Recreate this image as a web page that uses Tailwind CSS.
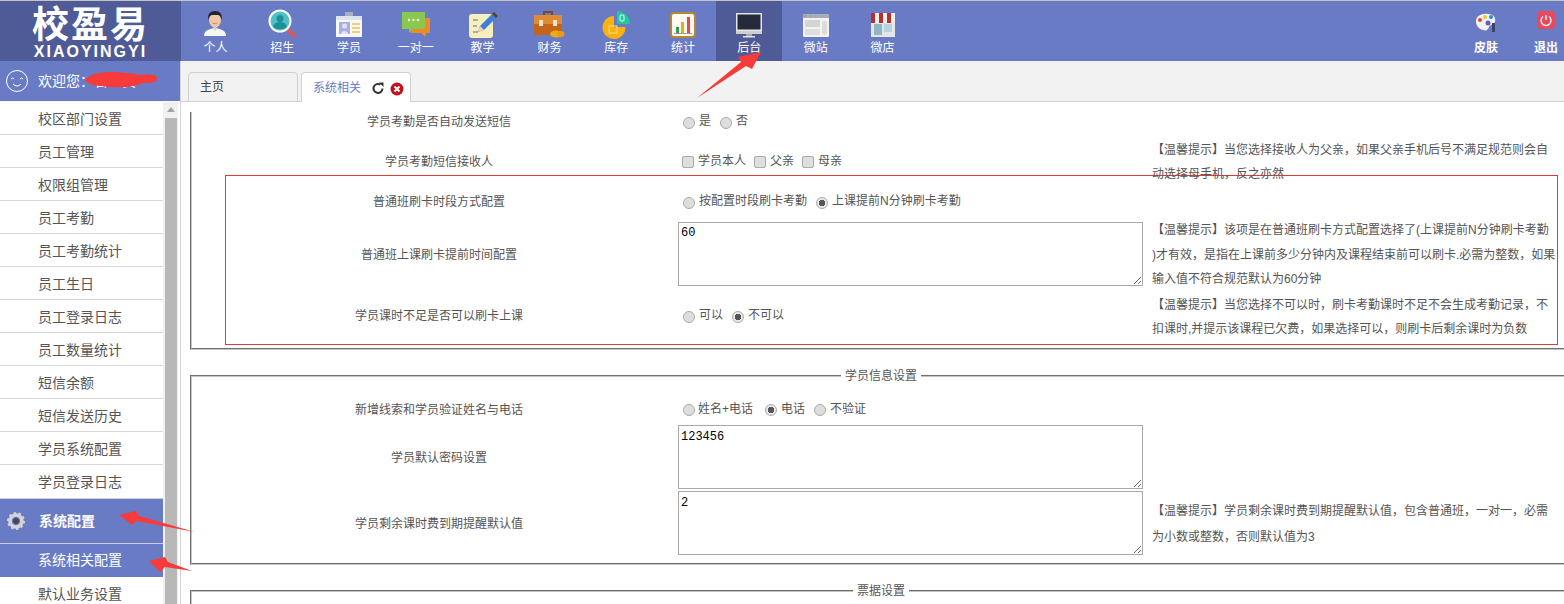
<!DOCTYPE html>
<html>
<head>
    <meta charset="utf-8">
    <title>校盈易 - 系统相关配置</title>
    <script src="https://cdn.jsdelivr.net/npm/@tailwindcss/browser@4"></script>
</head>
<body class="relative h-[604px] overflow-hidden bg-white font-['Liberation_Sans','Noto_Sans_CJK_SC',sans-serif] text-xs text-[#555]">

    <!-- Top nav -->
    <header class="flex h-[61px] overflow-hidden border-t border-[#c4c4c4] bg-[#6a7bc6] text-white">
        <div class="flex w-[181px] shrink-0 flex-col items-center bg-[#4f5b97] font-bold">
            <div class="mt-[7px] h-[35px] text-[37px] leading-[36px] tracking-[2px]">校盈易</div>
            <div class="mt-[1px] text-[16px] leading-[16px] tracking-[2px]">XIAOYINGYI</div>
        </div>
        <nav class="ml-[1px] flex">
            <a class="flex w-[66.8px] flex-col items-center pt-[8px]">
                <svg class="h-[30px] w-[30px]" viewBox="0 0 30 30"><path d="M4 27c0-5 4-7 11-8 7 1 11 3 11 8z" fill="#f6f6f2"/><path d="M12 19l3 3 3-3-3-1z" fill="#cfd6de"/><ellipse cx="15" cy="11" rx="6" ry="7.500" fill="#f2c7a5"/><path d="M8.500 11c-1.500-6 2-9 6.500-9s8 3 6.500 9c-.5-3-1.500-4.500-3.500-5h-6c-2 .5-3 2-3.500 5z" fill="#23262e"/><path d="M12.500 14q2.500 1.500 5 0" fill="none" stroke="#c98e6c"/></svg>
                <span class="leading-[18px]">个人</span>
            </a>
            <a class="flex w-[66.8px] flex-col items-center pt-[8px]">
                <svg class="h-[30px] w-[30px]" viewBox="0 0 30 30"><path d="M20 20l7 7" stroke="#e2574c" stroke-width="3.500" stroke-linecap="round"/><circle cx="13" cy="12" r="10.500" fill="#4fc0c4" stroke="#fff" stroke-width="2"/><circle cx="13" cy="9.500" r="3.500" fill="#1f8f98"/><path d="M6 18c1-4 4-5 7-5s6 1 7 5c-4 3-10 3-14 0z" fill="#1f8f98"/></svg>
                <span class="leading-[18px]">招生</span>
            </a>
            <a class="flex w-[66.8px] flex-col items-center pt-[8px]">
                <svg class="h-[30px] w-[30px]" viewBox="0 0 30 30"><rect x="11" y="3" width="8" height="5" fill="#a9afbe"/><rect x="2" y="7" width="26" height="21" fill="#f7f7f7"/><rect x="2" y="7" width="26" height="4" fill="#dfe3ea"/><rect x="5" y="13" width="11" height="12" fill="#a9b0dc"/><circle cx="10.500" cy="17" r="2.500" fill="#dfe2f3"/><path d="M7 25c0-4 7-4 7 0z" fill="#dfe2f3"/><path d="M18 15h8M18 19h8M18 23h8" stroke="#f0c14b" stroke-width="1.500"/></svg>
                <span class="leading-[18px]">学员</span>
            </a>
            <a class="flex w-[66.8px] flex-col items-center pt-[8px]">
                <svg class="h-[30px] w-[30px]" viewBox="0 0 30 30"><path d="M10 9h19v15h-4l-1 4-4-4H10z" fill="#f08a24"/><path d="M1 3h23v17H12l-4 4v-4H1z" fill="#8ac74f"/><circle cx="8" cy="11" r="1.200" fill="#fff"/><circle cx="12.500" cy="11" r="1.200" fill="#fff"/><circle cx="17" cy="11" r="1.200" fill="#fff"/></svg>
                <span class="leading-[18px]">一对一</span>
            </a>
            <a class="flex w-[66.8px] flex-col items-center pt-[8px]">
                <svg class="h-[30px] w-[30px]" viewBox="0 0 30 30"><rect x="1" y="5" width="24" height="24" rx="3" fill="#f6eebb"/><path d="M5 11h5M5 17h4M5 23h5" stroke="#8a9bb0" stroke-width="1.500"/><path d="M10 23l2-6L24 5l4 4-12 12z" fill="#3d7fd9"/><path d="M24 5l2-2 4 4-2 2z" fill="#6b3d1e"/><path d="M10 23l2-6 4 4z" fill="#f2d5a8"/></svg>
                <span class="leading-[18px]">教学</span>
            </a>
            <a class="flex w-[66.8px] flex-col items-center pt-[8px]">
                <svg class="h-[30px] w-[32px]" viewBox="0 0 32 30"><path d="M11 6V3h8v3" fill="none" stroke="#7b4a1e" stroke-width="2"/><rect x="1" y="6" width="28" height="20" rx="2" fill="#c4651a"/><rect x="1" y="6" width="28" height="9" fill="#e08a35"/><rect x="6" y="11" width="4" height="6" fill="#f1e2c8"/><rect x="20" y="11" width="4" height="6" fill="#f1e2c8"/><ellipse cx="23" cy="25" rx="6" ry="3.500" fill="#f0a81e"/><ellipse cx="28" cy="25" rx="3.500" ry="3" fill="#e89b12"/></svg>
                <span class="leading-[18px]">财务</span>
            </a>
            <a class="flex w-[66.8px] flex-col items-center pt-[8px]">
                <svg class="h-[30px] w-[30px]" viewBox="0 0 30 30"><path d="M13 18V7a11.500 11.500 0 1 0 11.500 11z" fill="#fbb20f"/><rect x="8" y="17" width="8" height="7" fill="none" stroke="#ffe08a"/><path d="M16 15V2a13 13 0 0 1 13 13z" fill="#21c7a0"/><rect x="19" y="6" width="4" height="6" rx="1" fill="none" stroke="#dffff5"/></svg>
                <span class="leading-[18px]">库存</span>
            </a>
            <a class="flex w-[66.8px] flex-col items-center pt-[8px]">
                <svg class="h-[30px] w-[30px]" viewBox="0 0 30 30"><rect x="3" y="4" width="24" height="24" rx="3" fill="#fdfbf3" stroke="#b9862f" stroke-width="2"/><rect x="8" y="18" width="3" height="6" fill="#27a34a"/><rect x="13" y="13" width="3" height="11" fill="#f0a81e"/><rect x="19" y="8" width="3" height="16" fill="#e84a4a"/><path d="M6 24.500h18" stroke="#999"/></svg>
                <span class="leading-[18px]">统计</span>
            </a>
            <a class="flex w-[66px] flex-col items-center bg-[#4f5b97] pt-[8px]">
                <svg class="h-[30px] w-[30px]" viewBox="0 0 30 30"><rect x="2" y="4" width="26" height="18" fill="#e4e4e4"/><rect x="3.500" y="5.500" width="23" height="15" fill="#252a3a"/><path d="M2 22h26v3H2z" fill="#cfcfcf"/><path d="M12 25h6v2h-6z" fill="#aaa"/><path d="M9 27h12v1.500H9z" fill="#e4e4e4"/></svg>
                <span class="leading-[18px]">后台</span>
            </a>
            <a class="flex w-[66.8px] flex-col items-center pt-[8px]">
                <svg class="h-[30px] w-[30px]" viewBox="0 0 30 30"><rect x="2" y="5" width="26" height="23" rx="1.500" fill="#f3f3f3"/><rect x="2" y="5" width="26" height="4" fill="#a8adbd"/><circle cx="4.500" cy="7" r=".8" fill="#e25555"/><circle cx="7" cy="7" r=".8" fill="#e2b955"/><circle cx="9.500" cy="7" r=".8" fill="#5ac05a"/><rect x="4" y="11" width="15" height="7" fill="#d4d4d4"/><rect x="4" y="20" width="15" height="6" fill="#dedede"/><rect x="21" y="12" width="5" height="14" rx="2" fill="#dcdcdc"/></svg>
                <span class="leading-[18px]">微站</span>
            </a>
            <a class="flex w-[66.8px] flex-col items-center pt-[8px]">
                <svg class="h-[30px] w-[30px]" viewBox="0 0 30 30"><rect x="3" y="12" width="24" height="16" fill="#e6e6e6"/><rect x="6" y="15" width="8" height="11" fill="#8fb6c4"/><rect x="16" y="15" width="8" height="8" fill="#b6d4dd"/><path d="M3 4h24v9H3z" fill="#f4f0e8"/><path d="M3 4h4v10H3zM11 4h4v10h-4zM19 4h4v10h-4z" fill="#b5302f"/></svg>
                <span class="leading-[18px]">微店</span>
            </a>
        </nav>
        <div class="-mr-3 ml-auto flex font-bold">
            <a class="flex w-[60px] flex-col items-center pt-[8px]">
                <svg class="h-[30px] w-[30px]" viewBox="0 0 30 30"><path d="M5 12c0-5 6-8 12-7 6 0 8 4 7 8-1 3-5 2-6 5-1 3-3 4-6 3-4-1-7-4-7-9z" fill="#f3f3f3"/><circle cx="9" cy="11" r="2" fill="#e8452c"/><circle cx="14" cy="8" r="2" fill="#f7c81e"/><circle cx="20" cy="8" r="2" fill="#1e8fe8"/><circle cx="17" cy="14" r="2.500" fill="#6a5acd"/><rect x="21" y="14" width="3" height="9" fill="#3c4566"/></svg>
                <span class="leading-[18px]">皮肤</span>
            </a>
            <a class="flex w-[60px] flex-col items-center pt-[8px]">
                <svg class="h-[30px] w-[30px]" viewBox="0 0 30 30"><rect x="6" y="2" width="18" height="18" rx="4" fill="#e64a5d"/><path d="M12 7.500a5 5 0 1 0 6 0" fill="none" stroke="#fff" stroke-width="1.300"/><path d="M15 6v5" stroke="#fff" stroke-width="1.300"/></svg>
                <span class="leading-[18px]">退出</span>
            </a>
        </div>
    </header>

    <div class="flex">
        <!-- Side menu -->
        <aside class="h-[543px] w-[181px] shrink-0 overflow-hidden border-r border-[#d4d4d4]">
            <div class="flex h-[40px] items-center bg-[#6a7bc6] pl-[6px] text-sm text-white">
                <svg class="h-[22px] w-[22px]" viewBox="0 0 22 22" fill="none" stroke="#fff" stroke-width="1"><circle cx="11" cy="11" r="10.500"/><path d="M5 9q1.500-2 3 0M14 9q1.500-2 3 0M7 14q4 4 8 0"/></svg>
                <span class="ml-[10px]">欢迎您：管理员</span>
            </div>
            <div class="mt-[1px] flex h-[502px]">
                <ul class="w-[163px] shrink-0 text-sm">
                    <li class="h-[33px] border-b border-[#d8d8d8] pl-[38px] pt-[1px] leading-[33px]">校区部门设置</li>
                    <li class="h-[33px] border-b border-[#d8d8d8] pl-[38px] pt-[1px] leading-[33px]">员工管理</li>
                    <li class="h-[33px] border-b border-[#d8d8d8] pl-[38px] pt-[1px] leading-[33px]">权限组管理</li>
                    <li class="h-[33px] border-b border-[#d8d8d8] pl-[38px] pt-[1px] leading-[33px]">员工考勤</li>
                    <li class="h-[33px] border-b border-[#d8d8d8] pl-[38px] pt-[1px] leading-[33px]">员工考勤统计</li>
                    <li class="h-[33px] border-b border-[#d8d8d8] pl-[38px] pt-[1px] leading-[33px]">员工生日</li>
                    <li class="h-[33px] border-b border-[#d8d8d8] pl-[38px] pt-[1px] leading-[33px]">员工登录日志</li>
                    <li class="h-[33px] border-b border-[#d8d8d8] pl-[38px] pt-[1px] leading-[33px]">员工数量统计</li>
                    <li class="h-[33px] border-b border-[#d8d8d8] pl-[38px] pt-[1px] leading-[33px]">短信余额</li>
                    <li class="h-[33px] border-b border-[#d8d8d8] pl-[38px] pt-[1px] leading-[33px]">短信发送历史</li>
                    <li class="h-[33px] border-b border-[#d8d8d8] pl-[38px] pt-[1px] leading-[33px]">学员系统配置</li>
                    <li class="h-[33px] pl-[38px] pt-[1px] leading-[33px]">学员登录日志</li>
                    <li class="flex h-[46px] items-center border-y border-[#c9cfe8] bg-[#6a7bc6] pl-[6px] font-bold text-white">
                        <svg class="h-[20px] w-[20px]" viewBox="0 0 20 20"><circle cx="10" cy="10" r="6" fill="none" stroke="#d5d5d5" stroke-width="3.500"/><circle cx="10" cy="10" r="8" fill="none" stroke="#d5d5d5" stroke-width="2" stroke-dasharray="2.500 2.500"/><circle cx="10" cy="10" r="3" fill="#4a4658"/></svg>
                        <span class="ml-[13px]">系统配置</span>
                    </li>
                    <li class="h-[33px] bg-[#6a7bc6] pl-[38px] leading-[33px] text-white">系统相关配置</li>
                    <li class="h-[33px] border-b border-[#d8d8d8] pl-[38px] pt-[1px] leading-[33px]">默认业务设置</li>
                </ul>
                <div class="flex w-[15px] shrink-0 flex-col items-center bg-[#f1f1f1]">
                    <div class="mt-[5px] h-0 w-0 border-x-[4px] border-b-[5px] border-x-transparent border-b-[#a3a3a3]"></div>
                    <div class="mt-[6px] w-[12px] flex-1 bg-[#b8b8b8]"></div>
                </div>
            </div>
        </aside>

        <main class="min-w-0 flex-1 overflow-hidden">
            <!-- Tabs -->
            <div class="flex h-[41px] items-end gap-[3px] border-b border-[#d0d0d0] bg-[#f2f2f2] pl-[7px]">
                <div class="-mb-px h-[30px] w-[110px] rounded-t-[4px] border border-[#d0d0d0] pl-[11px] leading-[28px] text-[#444]">主页</div>
                <div class="-mb-px flex h-[30px] w-[110px] items-center rounded-t-[4px] border border-b-0 border-[#d0d0d0] bg-white pl-[11px] text-[#6a7bc6]">
                    <span>系统相关</span>
                    <svg class="ml-[11px] h-[12px] w-[12px]" viewBox="0 0 12 12" fill="none" stroke="#333" stroke-width="2"><path d="M10.500 6.500A4.500 4.500 0 1 1 8.500 2.700"/><path d="M7 .5h4.500v4.500z" fill="#333" stroke="none"/></svg>
                    <svg class="ml-[6px] mt-[2px] h-[14px] w-[14px]" viewBox="0 0 14 14"><circle cx="7" cy="7" r="6.500" fill="#c2111c"/><path d="M4.500 4.500l5 5M9.500 4.500l-5 5" stroke="#fff" stroke-width="2"/></svg>
                </div>
            </div>

            <div class="h-[502px] w-[1383px] overflow-hidden pl-[9px]">
                <!-- 考勤 settings, scrolled so its top edge is out of view -->
                <div class="mt-[10px] h-[238px] w-[1382px] border-x-2 border-b-2 border-[#c4c4c4] [border-style:groove]">
                    <div class="flex h-[18px] items-center">
                        <div class="ml-[8px] w-[478px] pt-[2px] text-center">学员考勤是否自动发送短信</div>
                        <div class="flex items-center pl-[5px]">
                            <input type="radio" class="mt-[4px] h-[12px] w-[12px] appearance-none rounded-full border border-[#aaa] bg-[#dedede]">
                            <span class="ml-[4px]">是</span>
                            <input type="radio" class="ml-[9px] mt-[4px] h-[12px] w-[12px] appearance-none rounded-full border border-[#aaa] bg-[#dedede]">
                            <span class="ml-[4px]">否</span>
                        </div>
                    </div>
                    <div class="mt-[17px] flex h-[28px] items-center">
                        <div class="ml-[8px] w-[478px] pt-[2px] text-center">学员考勤短信接收人</div>
                        <div class="flex w-[474px] items-center pl-[4px]">
                            <input type="checkbox" class="mt-[1px] h-[12px] w-[12px] appearance-none rounded-[2px] border border-[#aaa] bg-[#dedede]">
                            <span class="ml-[4px]">学员本人</span>
                            <input type="checkbox" class="ml-[8px] mt-[1px] h-[12px] w-[12px] appearance-none rounded-[2px] border border-[#aaa] bg-[#dedede]">
                            <span class="ml-[4px]">父亲</span>
                            <input type="checkbox" class="ml-[8px] mt-[1px] h-[12px] w-[12px] appearance-none rounded-[2px] border border-[#aaa] bg-[#dedede]">
                            <span class="ml-[4px]">母亲</span>
                        </div>
                        <p class="whitespace-nowrap pt-[2px] leading-[24px]">【温馨提示】当您选择接收人为父亲，如果父亲手机后号不满足规范则会自<br>动选择母手机，反之亦然</p>
                    </div>

                    <!-- red highlighted group -->
                    <div class="ml-[33px] h-[170px] w-[1333px] border border-[#e03a3a] pt-[4px]">
                        <div class="flex h-[42px] items-center">
                            <div class="w-[426px] pt-[2px] text-center">普通班刷卡时段方式配置</div>
                            <div class="ml-[26px] flex items-center pl-[5px]">
                                <input type="radio" class="mt-[4px] h-[12px] w-[12px] appearance-none rounded-full border border-[#aaa] bg-[#dedede]">
                                <span class="ml-[4px]">按配置时段刷卡考勤</span>
                                <input type="radio" checked class="ml-[9px] mt-[4px] h-[12px] w-[12px] appearance-none rounded-full border border-[#aaa] bg-[radial-gradient(circle,#555_0,#555_3px,#e8e8e8_3.5px)]">
                                <span class="ml-[4px]">上课提前N分钟刷卡考勤</span>
                            </div>
                        </div>
                        <div class="flex h-[64px] items-center">
                            <div class="w-[426px] pt-[2px] text-center">普通班上课刷卡提前时间配置</div>
                            <textarea class="ml-[26px] h-[64px] w-[465px] shrink-0 border border-[#a9a9a9] bg-white p-[2px] pt-[3px] font-['Liberation_Mono',monospace] text-xs leading-[14px] text-black">60</textarea>
                            <p class="ml-[9px] whitespace-nowrap pt-[2px] leading-[24.5px]">【温馨提示】该项是在普通班刷卡方式配置选择了(上课提前N分钟刷卡考勤<br>)才有效，是指在上课前多少分钟内及课程结束前可以刷卡.必需为整数，如果<br>输入值不符合规范默认为60分钟</p>
                        </div>
                        <div class="flex h-[58px] items-center">
                            <div class="w-[426px] pt-[2px] text-center">学员课时不足是否可以刷卡上课</div>
                            <div class="ml-[26px] flex w-[474px] items-center pl-[5px]">
                                <input type="radio" class="mt-[4px] h-[12px] w-[12px] appearance-none rounded-full border border-[#aaa] bg-[#dedede]">
                                <span class="ml-[4px]">可以</span>
                                <input type="radio" checked class="ml-[9px] mt-[4px] h-[12px] w-[12px] appearance-none rounded-full border border-[#aaa] bg-[radial-gradient(circle,#555_0,#555_3px,#e8e8e8_3.5px)]">
                                <span class="ml-[4px]">不可以</span>
                            </div>
                            <p class="whitespace-nowrap pt-[4px] leading-[24px]">【温馨提示】当您选择不可以时，刷卡考勤课时不足不会生成考勤记录，不<br>扣课时,并提示该课程已欠费，如果选择可以，则刷卡后剩余课时为负数</p>
                        </div>
                    </div>
                </div>

                <!-- 学员信息设置 -->
                <fieldset class="mt-[17px] h-[198px] w-[1382px] border-2 border-[#c4c4c4] pt-[8px] [border-style:groove]">
                    <legend class="mx-auto px-[4px] leading-[18px]">学员信息设置</legend>
                    <div class="flex h-[32px] items-center">
                        <div class="ml-[8px] w-[478px] pt-[2px] text-center">新增线索和学员验证姓名与电话</div>
                        <div class="flex items-center pl-[5px]">
                            <input type="radio" class="mt-[2px] h-[12px] w-[12px] appearance-none rounded-full border border-[#aaa] bg-[#dedede]">
                            <span class="ml-[3px] w-[58px]">姓名+电话</span>
                            <input type="radio" checked class="ml-[9px] mt-[2px] h-[12px] w-[12px] appearance-none rounded-full border border-[#aaa] bg-[radial-gradient(circle,#555_0,#555_3px,#e8e8e8_3.5px)]">
                            <span class="ml-[4px]">电话</span>
                            <input type="radio" class="ml-[9px] mt-[2px] h-[12px] w-[12px] appearance-none rounded-full border border-[#aaa] bg-[#dedede]">
                            <span class="ml-[4px]">不验证</span>
                        </div>
                    </div>
                    <div class="flex h-[64px] items-center">
                        <div class="ml-[8px] w-[478px] pt-[2px] text-center">学员默认密码设置</div>
                        <textarea class="h-[64px] w-[465px] shrink-0 border border-[#a9a9a9] bg-white p-[2px] pt-[4px] font-['Liberation_Mono',monospace] text-xs leading-[14px] text-black">123456</textarea>
                    </div>
                    <div class="mt-[2px] flex h-[64px] items-center">
                        <div class="ml-[8px] w-[478px] pt-[2px] text-center">学员剩余课时费到期提醒默认值</div>
                        <textarea class="h-[64px] w-[465px] shrink-0 border border-[#a9a9a9] bg-white p-[2px] pt-[4px] font-['Liberation_Mono',monospace] text-xs leading-[14px] text-black">2</textarea>
                        <p class="ml-[9px] whitespace-nowrap pt-[2px] leading-[26px]">【温馨提示】学员剩余课时费到期提醒默认值，包含普通班，一对一，必需<br>为小数或整数，否则默认值为3</p>
                    </div>
                </fieldset>

                <!-- 票据设置 -->
                <fieldset class="mt-[17px] h-[60px] w-[1382px] border-2 border-[#c4c4c4] [border-style:groove]">
                    <legend class="mx-auto px-[4px] leading-[18px]">票据设置</legend>
                </fieldset>
            </div>
        </main>
    </div>

    <!-- red annotation marks drawn over the screenshot -->
    <svg class="pointer-events-none absolute left-0 top-0 h-[604px] w-[1564px]" viewBox="0 0 1564 604" fill="#f73a3a">
        <path d="M697 98L741 62 738 57 761 52 752 69 746 66z"/>
        <path d="M119 515L136 511 139 516 195 532 136 521 132 525z"/>
        <path d="M149 561L165 557 168 562 192 571 165 567 160 572z"/>
        <path d="M85 80c3-5 14-8 26-8 12 0 22 2 30 3 8-1 16-1 16 4 0 4-9 4-14 4-8 3-16 5-30 4-12 0-26-2-28-7z"/>
    </svg>
</body>
</html>
